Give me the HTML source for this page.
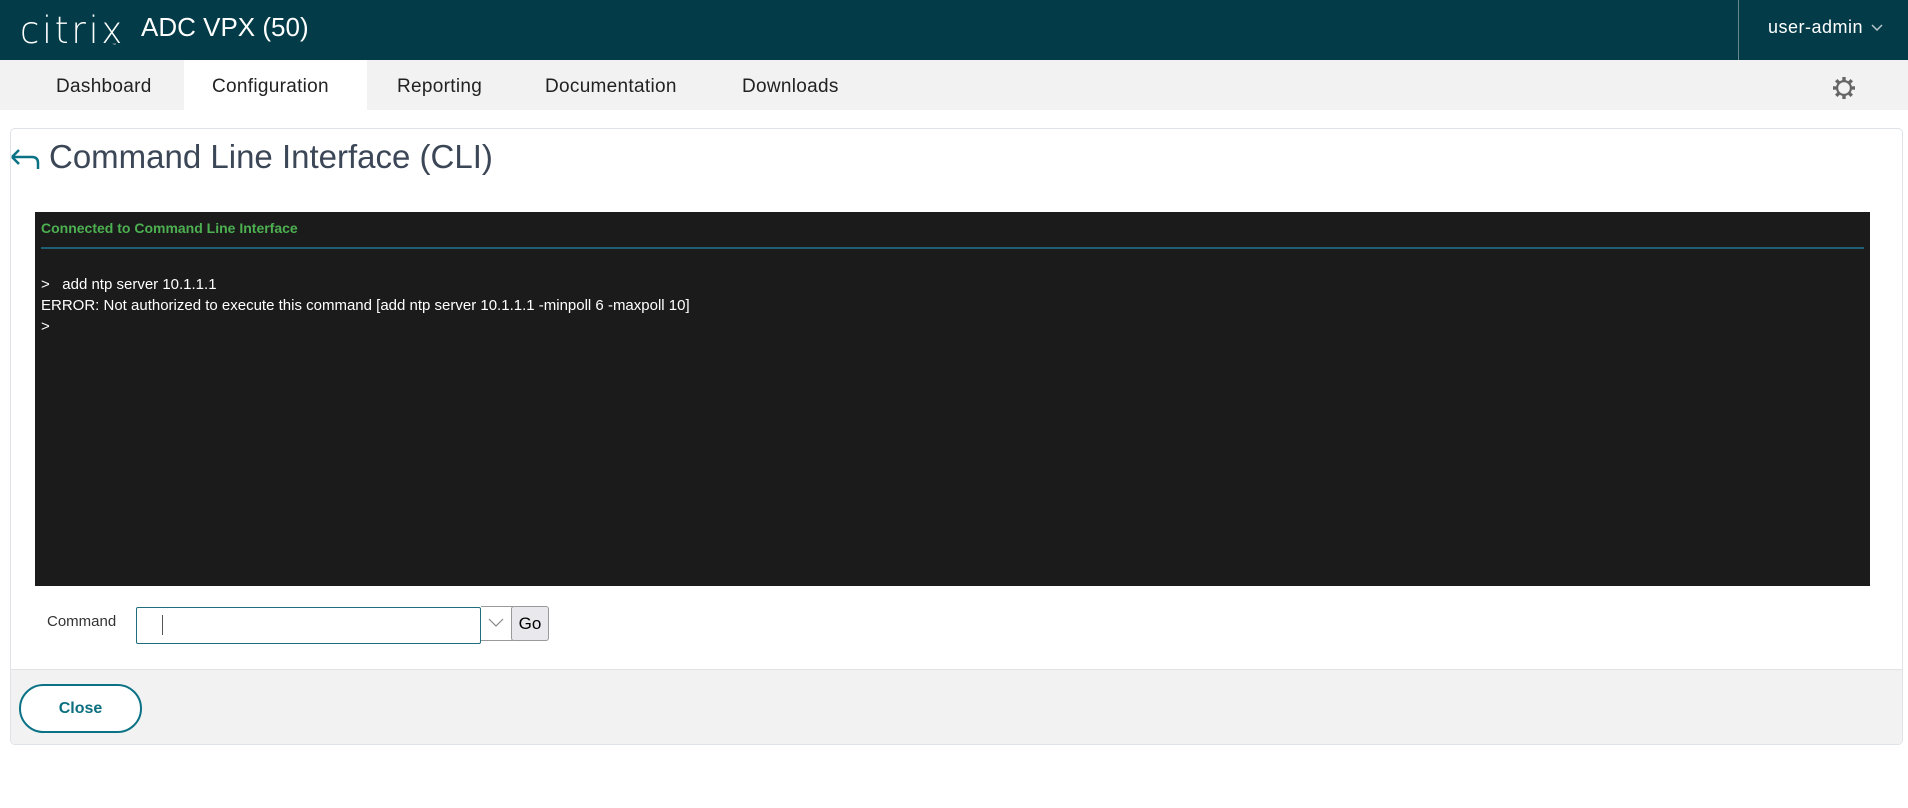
<!DOCTYPE html>
<html><head><meta charset="utf-8">
<style>
*{box-sizing:border-box;margin:0;padding:0}
body{width:1908px;height:808px;background:#fff;font-family:"Liberation Sans",sans-serif;position:relative;overflow:hidden}
.abs{position:absolute}
#hdr{left:0;top:0;width:1908px;height:60px;background:#033c48}
#nav{left:0;top:60px;width:1908px;height:50px;background:#f2f2f2}
.tab{top:62px;height:50px;line-height:50px;font-size:19px;color:#222;letter-spacing:0.3px}
#panel{left:10px;top:128px;width:1893px;height:617px;border:1px solid #dfe2e6;border-radius:5px;background:#fff;overflow:hidden}
#foot{left:0;top:540px;width:100%;height:77px;background:#f2f2f2;border-top:1px solid #e2e2e2}
#term{left:35px;top:212px;width:1835px;height:374px;background:#1b1b1b}
.tl{font-size:15px;color:#fff;left:41px;white-space:nowrap}
</style></head><body>
<div id="hdr" class="abs"></div>
<div class="abs" style="left:20px;top:9px;font-size:37px;color:#fff;letter-spacing:3px;font-family:'DejaVu Sans',sans-serif;font-weight:200;transform:scaleX(0.95);transform-origin:left">citrix</div>
<div class="abs" style="left:112px;top:42px;font-size:4px;color:#ccc">™</div>
<div class="abs" style="left:141px;top:12px;font-size:26px;color:#fff">ADC VPX (50)</div>
<div class="abs" style="left:1738px;top:0;width:1px;height:60px;background:#6a8790"></div>
<div class="abs" style="left:1768px;top:17px;font-size:18px;color:#fff;letter-spacing:0.5px">user-admin</div>
<svg class="abs" style="left:1871px;top:24px" width="12" height="8"><path d="M1 1l5 5 5-5" stroke="#b8c8cc" stroke-width="1.5" fill="none"/></svg>
<div id="nav" class="abs"></div>
<div class="abs" style="left:184px;top:60px;width:183px;height:50px;background:#fff"></div>
<div class="abs tab" style="left:56px">Dashboard</div>
<div class="abs tab" style="left:212px">Configuration</div>
<div class="abs tab" style="left:397px">Reporting</div>
<div class="abs tab" style="left:545px">Documentation</div>
<div class="abs tab" style="left:742px">Downloads</div>
<svg class="abs" style="left:1832px;top:76px" width="24" height="24" viewBox="0 0 24 24"><g fill="#666"><rect x="10.3" y="1" width="3.4" height="22"/><rect x="1" y="10.3" width="22" height="3.4"/><rect x="10.3" y="1" width="3.4" height="22" transform="rotate(45 12 12)"/><rect x="10.3" y="1" width="3.4" height="22" transform="rotate(-45 12 12)"/><circle cx="12" cy="12" r="8"/></g><circle cx="12" cy="12" r="5.8" fill="#f2f2f2"/></svg>
<div id="panel" class="abs"><div id="foot" class="abs"></div></div>
<svg class="abs" style="left:9px;top:145px" width="32" height="26"><path d="M3 12H23Q29 12 29 18V24M3 12L10 5M3 12L10 19" stroke="#0b7285" stroke-width="2.5" fill="none"/></svg>
<div class="abs" style="left:49px;top:138px;font-size:33px;color:#3b4656">Command Line Interface (CLI)</div>
<div id="term" class="abs"></div>
<div class="abs tl" style="top:220px;color:#4cb050;font-weight:bold;font-size:14px">Connected to Command Line Interface</div>
<div class="abs" style="left:41px;top:247px;width:1823px;height:2px;background:#1f5f74"></div>
<div class="abs tl" style="top:276px">&gt;&nbsp;&nbsp; add ntp server 10.1.1.1</div>
<div class="abs tl" style="top:297px">ERROR: Not authorized to execute this command [add ntp server 10.1.1.1 -minpoll 6 -maxpoll 10]</div>
<div class="abs tl" style="top:318px">&gt;</div>
<div class="abs" style="left:47px;top:613px;font-size:15px;color:#333">Command</div>
<div class="abs" style="left:136px;top:607px;width:345px;height:37px;border:1px solid #1e6f7b;border-radius:2px;background:#fff"></div>
<div class="abs" style="left:162px;top:615px;width:1px;height:20px;background:#555"></div>
<div class="abs" style="left:481px;top:606px;width:32px;height:35px;border:1px solid #999;border-left:none;background:#fff"></div>
<svg class="abs" style="left:488px;top:618px" width="16" height="10"><path d="M1 1l7 7 7-7" stroke="#888" stroke-width="1.2" fill="none"/></svg>
<div class="abs" style="left:511px;top:606px;width:38px;height:35px;border:1px solid #999;border-radius:3px;background:#e9e9ed;font-size:17px;line-height:33px;text-align:center;color:#000">Go</div>
<div class="abs" style="left:19px;top:684px;width:123px;height:49px;border:2px solid #0b7285;border-radius:25px;background:#fff;text-align:center;line-height:45px;font-size:16px;font-weight:bold;color:#0b6f80">Close</div>
</body></html>
